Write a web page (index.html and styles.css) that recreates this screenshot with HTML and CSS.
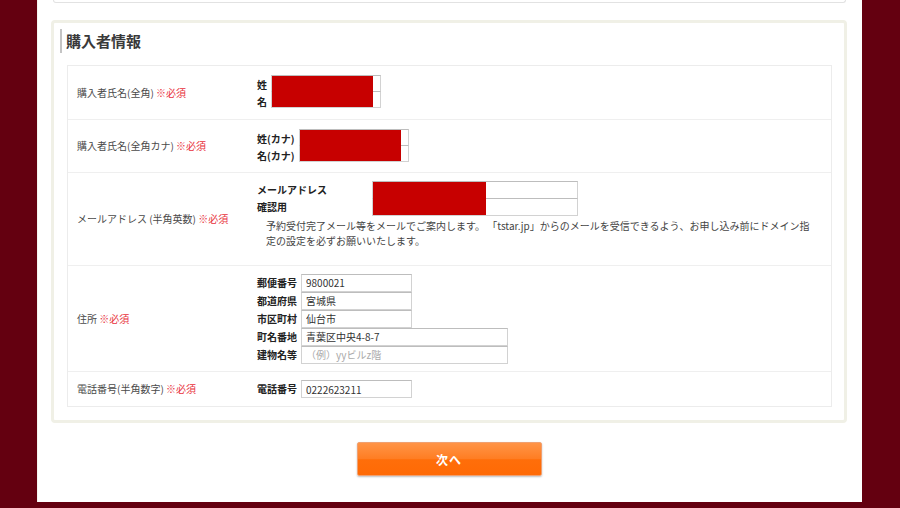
FILE: index.html
```html
<!DOCTYPE html>
<html lang="ja">
<head>
<meta charset="utf-8">
<title>購入者情報</title>
<link rel="stylesheet" href="styles.css">
</head>
<body>
<div class="page">
  <div class="prev-box"></div>
  <section class="section">
    <h2 class="title">購入者情報</h2>
    <div class="table">
      <div class="row row-name">
        <div class="label">購入者氏名(全角) <span class="req">※必須</span></div>
        <div class="field">
          <div class="pairs pairs-name">
            <div class="flabel">姓</div>
            <div class="inputs">
              <input class="inp w110" type="text" value="">
              <input class="inp w110 stack" type="text" value="">
              <div class="redact redact-name"></div>
            </div>
            <div class="flabel-extra">名</div>
          </div>
        </div>
      </div>
      <div class="row row-kana">
        <div class="label">購入者氏名(全角カナ) <span class="req">※必須</span></div>
        <div class="field">
          <div class="pairs pairs-kana">
            <div class="flabel">姓(カナ)</div>
            <div class="inputs">
              <input class="inp w110" type="text" value="">
              <input class="inp w110 stack" type="text" value="">
              <div class="redact redact-kana"></div>
            </div>
            <div class="flabel-extra">名(カナ)</div>
          </div>
        </div>
      </div>
      <div class="row row-mail">
        <div class="label">メールアドレス (半角英数) <span class="req">※必須</span></div>
        <div class="field field-mail">
          <div class="pairs pairs-mail">
            <div class="flabel">メールアドレス</div>
            <div class="inputs">
              <input class="inp w206 tall" type="text" value="">
              <input class="inp w206 tall stack" type="text" value="">
              <div class="redact redact-mail"></div>
            </div>
            <div class="flabel-extra">確認用</div>
          </div>
          <p class="note">予約受付完了メール等をメールでご案内します。 「tstar.jp」からのメールを受信できるよう、お申し込み前にドメイン指定の設定を必ずお願いいたします。</p>
        </div>
      </div>
      <div class="row row-addr">
        <div class="label">住所 <span class="req">※必須</span></div>
        <div class="field">
          <div class="addr">
            <div class="alabel">郵便番号</div><input class="inp ai w111" type="text" value="9800021">
            <div class="alabel">都道府県</div><input class="inp ai w111" type="text" value="宮城県">
            <div class="alabel">市区町村</div><input class="inp ai w111" type="text" value="仙台市">
            <div class="alabel">町名番地</div><input class="inp ai w207" type="text" value="青葉区中央4-8-7">
            <div class="alabel">建物名等</div><input class="inp ai w207" type="text" placeholder="（例）yyビルz階">
          </div>
        </div>
      </div>
      <div class="row row-tel">
        <div class="label">電話番号(半角数字) <span class="req">※必須</span></div>
        <div class="field">
          <div class="addr">
            <div class="alabel">電話番号</div><input class="inp ai w111" type="text" value="0222623211">
          </div>
        </div>
      </div>
    </div>
  </section>
  <div class="actions">
    <button class="next" type="button">次へ</button>
  </div>
</div>
</body>
</html>
```

FILE: styles.css
```css
* { box-sizing: border-box; }
html, body { margin: 0; padding: 0; }
body {
  background: #640010;
  font-family: "Noto Sans CJK JP", "Noto Sans", sans-serif;
  color: #333;
  font-size: 10px;
}
.page {
  width: 825px;
  height: 502px;
  margin: 0 auto 0 37px;
  background: #fff;
  border-left: 1px solid #f4f4ee;
  padding: 0 15px 0 13px;
}
.prev-box {
  height: 3px;
  margin: 0 1px 0 2px;
  border: 1px solid #e2e2e2;
  border-top: none;
  border-radius: 0 0 3px 3px;
}
.section {
  margin-top: 17px;
  border: 3px solid #f0f0e6;
  border-radius: 4px;
  padding: 6px 12px 13px 13px;
  height: 403px;
}
.title {
  margin: 0 0 12px -7px;
  padding-left: 4px;
  border-left: 2px solid #c4c4c4;
  font-size: 15px;
  font-weight: bold;
  line-height: 23px;
  height: 24px;
  color: #3a3a3a;
}
.table {
  border: 1px solid #ececec;
}
.row {
  display: flex;
  align-items: center;
  border-top: 1px solid #efefef;
}
.row:first-child { border-top: none; }
.row-name { height: 53px; }
.row-kana { height: 53px; }
.row-mail { height: 93px; }
.row-addr { height: 106px; }
.row-tel { height: 35px; }
.label {
  width: 189px;
  padding-left: 9px;
  color: #4a4a4a;
  font-size: 10px;
  line-height: 14px;
}
.req { color: #e8313c; }
.field {
  flex: 1;
}
.field-mail { padding-bottom: 10px; }
.pairs {
  display: grid;
  grid-template-columns: auto auto;
  justify-content: start;
  column-gap: 4px;
  align-items: start;
}
.pairs-mail { grid-template-columns: 111px auto; }
.flabel, .flabel-extra, .alabel {
  font-weight: bold;
  color: #222;
  font-size: 10px;
}
.flabel { grid-column: 1; grid-row: 1; line-height: 17px; height: 17px; margin-top: 1px; }
.flabel-extra { grid-column: 1; grid-row: 1; line-height: 17px; margin-top: 18px; }
.pairs-mail .flabel { margin-top: 0; }
.pairs-mail .flabel-extra { margin-top: 17px; }
.inputs {
  grid-column: 2;
  grid-row: 1;
  position: relative;
  display: flex;
  flex-direction: column;
}
.inp {
  display: block;
  height: 17px;
  margin: 0;
  padding: 0 4px;
  border: 1px solid #d2d2d2;
  border-top-color: #bdbdbd;
  border-radius: 0;
  background: #fff;
  font-family: "Noto Sans CJK JP", "Noto Sans", sans-serif;
  font-size: 10px;
  color: #333;
  outline: none;
}
.inp.tall { height: 18px; }
.inp.stack { margin-top: -1px; }
.inp::placeholder { color: #aaa; }
.w110 { width: 110px; }
.w206 { width: 206px; }
.w111 { width: 111px; }
.w207 { width: 207px; }
.redact {
  position: absolute;
  top: 1px;
  left: 1px;
  height: 31px;
  background: #c70000;
}
.redact-name { width: 101px; }
.redact-kana { width: 101px; }
.redact-mail { width: 113px; height: 33px; }
.note {
  margin: 2px 0 0 9px;
  width: 552px;
  font-size: 10px;
  line-height: 15px;
  color: #444;
}
.addr {
  display: grid;
  grid-template-columns: auto auto;
  justify-content: start;
  column-gap: 4px;
  align-items: center;
}
.alabel { line-height: 17.6px; }
.ai { height: 18px; }
.actions {
  display: flex;
  justify-content: center;
  padding-top: 19px;
}
.next {
  width: 185px;
  height: 34px;
  border: 1px solid #f0a070;
  border-radius: 2px;
  background: linear-gradient(#ff9447 0%, #ff7d22 50%, #ff6e0a 52%, #ff6a05 100%);
  box-shadow: 0 1px 2px rgba(0,0,0,0.25);
  color: #fff;
  font-family: "Noto Sans CJK JP", "Noto Sans", sans-serif;
  font-size: 12px;
  font-weight: bold;
  letter-spacing: 1px;
  cursor: pointer;
}
```
